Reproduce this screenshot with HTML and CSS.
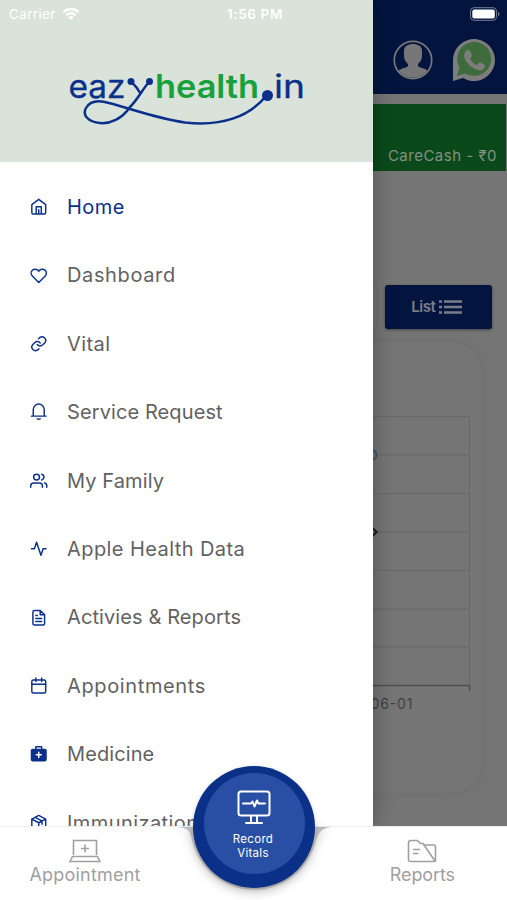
FILE: index.html
```html
<!DOCTYPE html>
<html lang="en">
<head>
<meta charset="utf-8">
<title>eazyhealth.in</title>
<link rel="stylesheet" href="styles.css">
</head>
<body>
<div class="app">
  <main class="page">
    <header class="topbar">
      <svg width="42" height="42" viewBox="0 0 42 42"><circle cx="21" cy="21" r="18.700" fill="none" stroke="#777" stroke-width="1.700"/><path d="M12 12C12 7 16 5 21 5s9 2 9 7v5c0 4-2 6-4 8v2c2 2 6 2 9.500 4.500A18 18 0 0 1 6.500 31.500C10 29 14 29 16 27v-2c-2-2-4-4-4-8z" fill="#777"/></svg>
      <svg width="46" height="46" viewBox="0 0 46 46"><path d="M3 44V24A21 21 0 1 1 13 41z" fill="#7d7d7d"/><path d="M7 39l2.500-8.500a17 17 0 1 1 6 6z" fill="#3d6b3b"/><path d="M16 14c2-2 4-1 5 2l1 3-2 3c2 3 4 5 7 6l3-3 5 3c0 4-3 6-7 5-7-2-13-8-14-14 0-2 1-4 2-5z" fill="#7d7d7d"/></svg>
    </header>
    <section class="cash">CareCash - ₹0</section>
    <div class="tools">
      <div class="field"></div>
      <button class="list-btn">List
        <svg width="23" height="14" viewBox="0 0 23 14"><path d="M0 1.500h3M0 7h3M0 12.500h3M5 1.500h18M5 7h18M5 12.500h18" stroke="#7b7e89" stroke-width="2.600"/></svg>
      </button>
    </div>
    <section class="card">
      <svg width="472" height="300" viewBox="0 0 472 300">
        <path d="M30 6.500H459.500M30 45H459.500M30 83.500H459.500M30 122H459.500M30 160.500H459.500M30 199H459.500M30 237H459.500M459.500 6V275" fill="none" stroke="#686868"/>
        <path d="M30 275.500H459.500V281" fill="none" stroke="#505050" stroke-width="1.500"/>
        <circle cx="362" cy="45" r="4.500" fill="#757575" stroke="#3d5968" stroke-width="2"/>
        <path d="M361.500 117l5 5-5 5-5-5z" fill="#757575" stroke="#181818" stroke-width="2"/>
        <text class="tick" x="360.500" y="299" textLength="42">06-01</text>
      </svg>
    </section>
  </main>

  <aside class="drawer">
    <div class="brand">
      <svg width="240" height="62" viewBox="66 68 240 62">
        <g fill="none" stroke="#0b308b" stroke-width="2.500" stroke-linecap="round">
          <path d="M131.500 82C134 84.500 137 87 139.500 92M149 82C142 90 138 99 130 107C122 119 110 124 100 123C88 122 82 115 86 108C90 101 99 100 109 103C132 109 155 118 185 122.500C222 127 250 116 266 96"/>
        </g>
        <circle cx="131" cy="81.500" r="3.500" fill="#0b308b"/><circle cx="149.500" cy="81.500" r="3.500" fill="#0b308b"/><circle cx="267.500" cy="95.500" r="5.500" fill="#0b308b"/>
        <text class="logo blue" x="68.500" y="97.500" textLength="57" lengthAdjust="spacingAndGlyphs">eaz</text>
        <text class="logo green" x="155" y="97.500" textLength="104" lengthAdjust="spacingAndGlyphs">health</text>
        <text class="logo blue" x="274" y="97.500" textLength="31" lengthAdjust="spacingAndGlyphs">in</text>
      </svg>
    </div>
    <nav class="menu">
      <a class="item wide active"><svg class="ic" viewBox="0 0 24 24"><path d="M2.500 9L12 1.800 21.500 9v11a2 2 0 0 1-2 2h-15a2 2 0 0 1-2-2zM8.500 22V12h7v10M12 22v-6"/></svg><span>Home</span></a>
      <a class="item widest"><svg class="ic" viewBox="0 0 24 24"><path d="M20.800 4.600a5.500 5.500 0 0 0-7.800 0L12 5.700l-1-1.100a5.500 5.500 0 0 0-7.800 7.800L12 21.200l8.800-8.800a5.500 5.500 0 0 0 0-7.800z"/></svg><span>Dashboard</span></a>
      <a class="item wide"><svg class="ic" viewBox="0 0 24 24"><path d="M10 13a5 5 0 0 0 7.500.500l3-3a5 5 0 0 0-7-7l-1.800 1.700M14 11a5 5 0 0 0-7.500-.500l-3 3a5 5 0 0 0 7 7l1.700-1.700"/></svg><span>Vital</span></a>
      <a class="item"><svg class="ic" viewBox="0 0 24 24"><path d="M2 18h20M4.500 18V9a7.500 7.500 0 0 1 15 0v9M10 21.500c1 1 3 1 4 0"/></svg><span>Service Request</span></a>
      <a class="item"><svg class="ic" viewBox="0 0 24 24"><path d="M17 21v-2a4 4 0 0 0-4-4H5a4 4 0 0 0-4 4v2M23 21v-2a4 4 0 0 0-3-3.900M16 3.100a4 4 0 0 1 0 7.800"/><circle cx="9" cy="7" r="4"/></svg><span>My Family</span></a>
      <a class="item wide"><svg class="ic" viewBox="0 0 24 24"><path d="M22 12h-4l-3 9L9 3l-3 9H2"/></svg><span>Apple Health Data</span></a>
      <a class="item"><svg class="ic" viewBox="0 0 24 24"><path d="M14 2H6a2 2 0 0 0-2 2v16a2 2 0 0 0 2 2h12a2 2 0 0 0 2-2V8zM14 2v6h6M8 9h2M8 13h8M8 17h8"/></svg><span>Activies &amp; Reports</span></a>
      <a class="item widest"><svg class="ic" viewBox="0 0 24 24"><rect x="2.500" y="4" width="19" height="18" rx="2"/><path d="M2.500 10h19M8 1.500V6M16 1.500V6"/></svg><span>Appointments</span></a>
      <a class="item"><svg class="ic" viewBox="0 0 24 24"><path d="M8 6V2.500h8V6"/><rect x="2" y="6" width="20" height="15.500" rx="1.500" fill="#0b308b"/><path d="M12 10v7M8.500 13.500h7" stroke="#fff"/></svg><span>Medicine</span></a>
      <a class="item wide"><svg class="ic" viewBox="0 0 24 24"><path d="M2.500 7L12 2l9.500 5v11L12 23l-9.500-5zM2.500 7l9.500 5 9.500-5M12 12v11M7 4.500l9.500 5V14"/></svg><span>Immunization</span></a>
    </nav>
  </aside>

  <div class="status">
    <span class="carrier">Carrier <svg width="18" height="14" viewBox="0 0 18 14"><path d="M1.500 5a11 11 0 0 1 15 0M4.300 8.100a7 7 0 0 1 9.400 0" fill="none" stroke="#fff" stroke-width="2.400"/><path d="M6.300 10.200a4 4 0 0 1 5.400 0L9 13z" fill="#fff"/></svg></span>
    <span class="time">1:56 PM</span>
    <svg width="31" height="14" viewBox="0 0 31 14"><rect x=".5" y=".7" width="26" height="12.600" rx="3.500" fill="none" stroke="#777e94"/><rect x="2.300" y="2.500" width="22.500" height="9" rx="2" fill="#fff"/><path d="M28 4.500q3 2.500 0 5z" fill="#777e94"/></svg>
  </div>

  <footer class="tabs">
    <div class="tab">
      <svg width="32" height="24" viewBox="0 0 32 24" fill="none" stroke="#a0a0a0" stroke-width="1.600"><path d="M4.500 16V1.500h23V16M1 22.500l2.500-5h25l2.500 5zM16 5.500v8M12 9.500h8"/></svg>
      <span class="t1">Appointment</span>
    </div>
    <div class="tab">
      <svg width="30" height="24" viewBox="0 0 30 24" fill="none" stroke="#a0a0a0" stroke-width="1.600" stroke-linejoin="round"><path d="M27.500 22.500H3.500a2 2 0 0 1-2-2v-17a2 2 0 0 1 2-2h7l3 3H16L28 22M17.500 6H27a1.500 1.500 0 0 1 1.500 1.500v14a1 1 0 0 1-1 1M6 10.500h7M6 14.500h5.500"/></svg>
      <span class="t2">Reports</span>
    </div>
  </footer>

  <svg class="notch" width="160" height="74" viewBox="0 0 160 74"><path d="M3 0C15 1 16 4 18 13A63.500 63.500 0 0 0 142 13C145 4 149 1 157 0z"/></svg>
  <button class="record"><span class="disc">
    <svg width="34" height="35" viewBox="0 0 34 35" fill="none" stroke="#fff" stroke-width="2" stroke-linecap="round" stroke-linejoin="round"><rect x="1.500" y="1.500" width="31" height="24" rx="2.500"/><path d="M14 26v6M20 26v6M9 33h16M6 13.500h8l1.500-2 2 5 2.500-6 1.500 3H28"/></svg>
    <span class="label">Record<br>Vitals</span></span>
  </button>
</div>
</body>
</html>
```

FILE: styles.css
```css
* { box-sizing: border-box; }
body { margin: 0; font-family: Inter, "Open Sans", sans-serif; }
button { border: 0; padding: 0; font: inherit; }
.app { position: relative; width: 507px; height: 900px; overflow: hidden; background: #757575; }

.page { height: 826px; background: #757575; }
.topbar { height: 94px; display: flex; justify-content: flex-end; gap: 16px; padding: 39px 11px 0 0; background: #03153f; }
.topbar svg:last-child { margin-top: -2px; }
.cash { height: 67px; margin: 10px 1px 0 0; padding: 42px 9px 0 0; background: #0a4a1a; color: #858f87; font-size: 15px; letter-spacing: .5px; line-height: 20px; text-align: right; }
.tools { display: flex; gap: 7px; height: 44px; margin: 113.500px 15px 0 10px; }
.field { flex: 1; border: 1px solid #6d6d6d; border-radius: 3px; }
.list-btn { width: 107.500px; display: flex; align-items: center; justify-content: center; gap: 4px; padding-right: 3px; border-radius: 3px; background: #03153f; color: #7b7e89; font-size: 15px; font-weight: 600; letter-spacing: -.5px; box-shadow: 0 1px 3px #444; }
.card { width: 472px; height: 451px; margin: 13.500px 0 0 10px; padding-top: 68px; border-radius: 32px; box-shadow: 0 0 9px #6c6c6c; }
.card svg { display: block; overflow: visible; }
.tick { font-size: 14px; fill: #414141; }

.drawer { position: absolute; left: 0; top: 0; width: 372.500px; height: 826px; overflow: hidden; background: #fff; box-shadow: 0 0 20px rgba(0,0,0,.3); }
.brand { height: 162px; padding: 68px 0 0 66px; background: #d9e3da; }
.brand svg { display: block; overflow: visible; }
.logo { font-family: Inter, sans-serif; font-size: 32px; }
.blue { fill: #0b308b; font-weight: 400; stroke: #0b308b; stroke-width: .3px; }
.green { fill: #17a03b; font-weight: 600; }
.menu { padding-top: 10.800px; }
.item { display: flex; align-items: center; gap: 19.500px; height: 68.400px; padding-left: 30px; color: #626262; font-size: 20px; font-weight: 400; letter-spacing: .1px; white-space: nowrap; }
.wide { letter-spacing: .42px; }
.widest { letter-spacing: .63px; }
.active { color: #0b308b; }
.ic { width: 17.500px; height: 17.500px; fill: none; stroke: #0b308b; stroke-width: 2; stroke-linecap: round; stroke-linejoin: round; }

.status { position: absolute; left: 0; top: 0; width: 507px; height: 27px; padding: 0 6px 0 9px; display: grid; grid-template-columns: 1fr auto 1fr; align-items: center; color: #fff; font-size: 13.500px; }
.status > svg { justify-self: end; }
.carrier { display: flex; align-items: center; gap: 6px; letter-spacing: .35px; }
.time { font-weight: 600; font-size: 13.500px; letter-spacing: .6px; }

.tabs { position: relative; height: 74px; display: flex; justify-content: space-between; padding: 12px 52px 0 29.500px; background: #fff; border-top: 1px solid #eee; color: #a0a0a0; font-size: 18px; }
.tab { display: flex; flex-direction: column; align-items: center; line-height: 23px; }
.t1 { letter-spacing: .2px; }
.t2 { letter-spacing: -.1px; }

.notch { position: absolute; left: 174px; top: 827px; fill: #bababa; filter: drop-shadow(0 3px 5px rgba(0,0,0,.2)); }
.record { position: absolute; left: 193px; top: 766px; width: 122px; height: 122px; display: flex; justify-content: center; padding-top: 6.500px; border-radius: 50%; background: #0a3187; color: #fff; box-shadow: 0 1px 4px rgba(0,0,0,.2); }
.disc { width: 101px; height: 101px; display: flex; flex-direction: column; align-items: center; gap: 7px; padding-top: 17px; border-radius: 50%; background: #284fa3; font-size: 11.500px; line-height: 14px; letter-spacing: .3px; }
.label { margin-right: 2px; }
```
